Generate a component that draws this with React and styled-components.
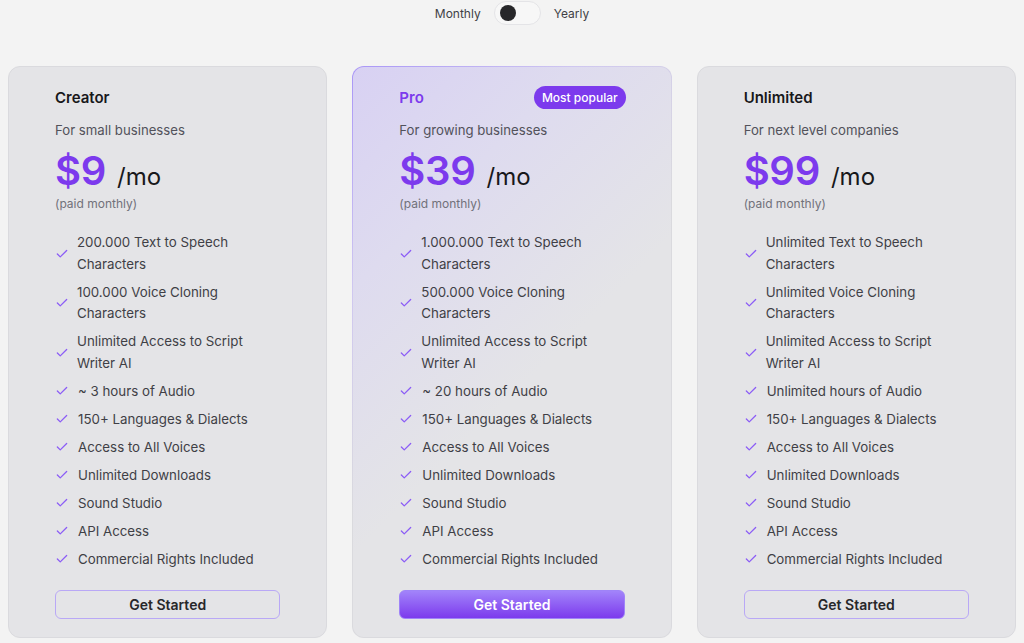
import React from "react";
import styled, { createGlobalStyle, css } from "styled-components";

const Global = createGlobalStyle`
  html, body { margin: 0; padding: 0; }
  body {
    background: #f3f3f3;
    font-family: Inter, "Noto Sans", sans-serif;
    -webkit-font-smoothing: antialiased;
  }
  * { box-sizing: border-box; }
`;

const Page = styled.div`
  width: 1024px;
  height: 643px;
  padding: 1px 8px 0;
  overflow: hidden;
`;

const ToggleRow = styled.div`
  display: flex;
  align-items: center;
  justify-content: center;
  gap: 13px;
  height: 24px;
  font-size: 12px;
  color: #3f3f46;
`;

const Switch = styled.div`
  width: 47px;
  height: 24px;
  border-radius: 12px;
  background: #f7f7f7;
  border: 1px solid #e4e4e7;
  display: flex;
  align-items: center;
  padding-left: 5px;
`;

const Knob = styled.span`
  width: 16px;
  height: 16px;
  border-radius: 50%;
  background: #27272a;
`;

const Grid = styled.div`
  margin-top: 41px;
  display: grid;
  grid-template-columns: repeat(3, 1fr);
  gap: 25px;
`;

const Card = styled.div`
  height: 572px;
  border-radius: 12px;
  padding: 19px 46px 0;
  display: flex;
  flex-direction: column;
  border: 1px solid #dadade;
  background: #e4e4e7;
  ${(p) =>
    p.$featured &&
    css`
      border: 1px solid transparent;
      background: linear-gradient(135deg, #d8d1f3 0%, #dedbef 25%, #e4e4e7 55%) padding-box,
        linear-gradient(135deg, #a996f7 0%, #cfc7f0 25%, #dadade 50%) border-box;
    `}
`;

const Head = styled.div`
  display: flex;
  align-items: center;
  justify-content: space-between;
  height: 22px;
`;

const Title = styled.div`
  font-size: 15px;
  font-weight: 600;
  color: ${(p) => (p.$featured ? "#7c3aed" : "#18181b")};
`;

const Badge = styled.span`
  height: 23px;
  padding: 0 8px;
  margin-right: -1px;
  border-radius: 12px;
  background: #7c3aed;
  color: #fff;
  font-size: 12px;
  font-weight: 500;
  display: flex;
  align-items: center;
`;

const Desc = styled.div`
  margin-top: 12px;
  font-size: 13.2px;
  line-height: 20px;
  color: #52525b;
`;

const PriceRow = styled.div`
  margin-top: 6px;
  display: flex;
  align-items: baseline;
  gap: 11px;
  height: 46px;
`;

const Amount = styled.span`
  font-size: 40px;
  font-weight: 600;
  color: #7c3aed;
  letter-spacing: -0.3px;
`;

const Per = styled.span`
  font-size: 24px;
  color: #18181b;
`;

const Paid = styled.div`
  margin-top: 4px;
  font-size: 12px;
  line-height: 16px;
  color: #71717a;
`;

const Features = styled.ul`
  list-style: none;
  margin: 20px 0 0;
  padding: 0;
  display: flex;
  flex-direction: column;
  gap: 6.5px;
`;

const Feature = styled.li`
  display: flex;
  align-items: center;
  gap: 8px;
  font-size: 13.3px;
  line-height: 21.5px;
  color: #3f3f46;
`;

const FeatureText = styled.span`
  max-width: 185px;
  padding-left: ${(p) => (p.$wrap ? "0" : "1px")};
`;

const CheckIcon = styled.svg`
  flex: none;
  width: 14px;
  height: 14px;
`;

const Button = styled.button`
  margin-top: 20px;
  height: 29px;
  width: 100%;
  border-radius: 6px;
  font-family: inherit;
  font-size: 14px;
  font-weight: 600;
  cursor: pointer;
  border: 1px solid #b9a8f6;
  background: transparent;
  color: #27272a;
  ${(p) =>
    p.$featured &&
    css`
      border: 1px solid #9f83f8;
      background: linear-gradient(180deg, #a284fa 0%, #7c3aed 100%);
      color: #fff;
    `}
`;

const Check = () => (
  <CheckIcon viewBox="0 0 24 24" fill="none" stroke="#8b5cf6" strokeWidth="2.2" strokeLinecap="round" strokeLinejoin="round">
    <path d="M20 6 9 17l-5-5" />
  </CheckIcon>
);

const plans = [
  {
    name: "Creator",
    desc: "For small businesses",
    price: "$9",
    features: [
      ["200.000 Text to Speech Characters", true],
      ["100.000 Voice Cloning Characters", true],
      ["Unlimited Access to Script Writer AI", true],
      ["~ 3 hours of Audio"],
    ],
  },
  {
    name: "Pro",
    desc: "For growing businesses",
    price: "$39",
    featured: true,
    features: [
      ["1.000.000 Text to Speech Characters", true],
      ["500.000 Voice Cloning Characters", true],
      ["Unlimited Access to Script Writer AI", true],
      ["~ 20 hours of Audio"],
    ],
  },
  {
    name: "Unlimited",
    desc: "For next level companies",
    price: "$99",
    features: [
      ["Unlimited Text to Speech Characters", true],
      ["Unlimited Voice Cloning Characters", true],
      ["Unlimited Access to Script Writer AI", true],
      ["Unlimited hours of Audio"],
    ],
  },
];

const common = [
  "150+ Languages & Dialects",
  "Access to All Voices",
  "Unlimited Downloads",
  "Sound Studio",
  "API Access",
  "Commercial Rights Included",
];

export default function App() {
  return (
    <Page>
      <Global />
      <ToggleRow>
        <span>Monthly</span>
        <Switch>
          <Knob />
        </Switch>
        <span>Yearly</span>
      </ToggleRow>
      <Grid>
        {plans.map((p) => (
          <Card key={p.name} $featured={p.featured}>
            <Head>
              <Title $featured={p.featured}>{p.name}</Title>
              {p.featured && <Badge>Most popular</Badge>}
            </Head>
            <Desc>{p.desc}</Desc>
            <PriceRow>
              <Amount>{p.price}</Amount>
              <Per>/mo</Per>
            </PriceRow>
            <Paid>(paid monthly)</Paid>
            <Features>
              {[...p.features, ...common.map((c) => [c])].map(([t, wrap]) => (
                <Feature key={t}>
                  <Check />
                  <FeatureText $wrap={wrap}>{t}</FeatureText>
                </Feature>
              ))}
            </Features>
            <Button $featured={p.featured}>Get Started</Button>
          </Card>
        ))}
      </Grid>
    </Page>
  );
}
